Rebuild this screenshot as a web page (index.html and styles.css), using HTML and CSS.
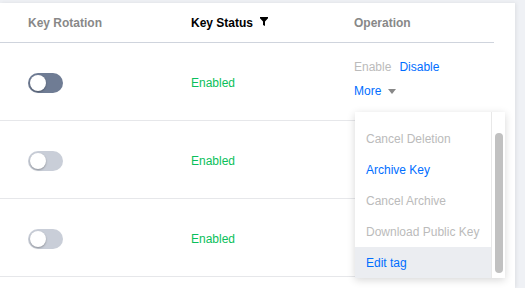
FILE: index.html
```html
<!DOCTYPE html>
<html lang="en">

<head>
    <meta charset="UTF-8">
    <meta name="viewport" content="width=device-width, initial-scale=1.0">
    <title>Key List</title>
    <link rel="stylesheet" href="styles.css">
</head>

<body>
    <div class="panel">
        <div class="table">
            <div class="row head">
                <div class="cell">Key Rotation</div>
                <div class="cell strong">Key Status
                    <svg class="filter" width="8" height="9" viewBox="0 0 8 9"><path d="M0 0H8V1.2L5 4.5V9L3 8V4.5L0 1.2Z" fill="#000"/></svg>
                </div>
                <div class="cell">Operation</div>
            </div>

            <div class="row">
                <div class="cell"><span class="switch dark"><span class="knob"></span></span></div>
                <div class="cell"><span class="status">Enabled</span></div>
                <div class="cell ops">
                    <div class="op-line"><span class="link off">Enable</span><span class="link">Disable</span></div>
                    <div class="op-line"><span class="link">More</span><span class="caret"></span></div>
                </div>
            </div>

            <div class="row">
                <div class="cell"><span class="switch"><span class="knob"></span></span></div>
                <div class="cell"><span class="status">Enabled</span></div>
                <div class="cell"></div>
            </div>

            <div class="row">
                <div class="cell"><span class="switch"><span class="knob"></span></span></div>
                <div class="cell"><span class="status">Enabled</span></div>
                <div class="cell"></div>
            </div>
        </div>

        <!-- "More" menu, opened and scrolled down -->
        <div class="dropdown">
            <div class="menu">
                <ul class="menu-list">
                    <li class="off"></li>
                    <li class="off">Cancel Deletion</li>
                    <li>Archive Key</li>
                    <li class="off">Cancel Archive</li>
                    <li class="off">Download Public Key</li>
                    <li class="hover">Edit tag</li>
                </ul>
            </div>
            <div class="scroll"><div class="thumb"></div></div>
        </div>
    </div>
</body>

</html>
```

FILE: styles.css
```css
body {
    margin: 0;
    background-color: #eff1f5;
    font-family: "Liberation Sans", Arial, Helvetica, sans-serif;
    font-size: 12px;
    color: #000;
}

.panel {
    position: relative;
    margin-top: 3px;
    width: 515px;
    height: 285px;
    background-color: #fff;
    box-shadow: 1px 0 4px rgba(0, 0, 0, 0.08);
    overflow: hidden;
}

.table {
    width: 494px;
}

.row {
    display: grid;
    grid-template-columns: 163px 163px 1fr;
    height: 77px;
    border-bottom: 1px solid #e6e7ea;
}

.row.head {
    height: 39px;
    border-bottom: 1px solid #cfd4dd;
}

.cell {
    display: flex;
    align-items: center;
    padding-left: 28px;
}

.head .cell {
    color: #888;
    font-weight: bold;
}

.head .cell.strong {
    color: #000;
}

.filter {
    margin-left: 7px;
    margin-top: -2px;
}

.switch {
    position: relative;
    display: inline-block;
    width: 35px;
    height: 20px;
    border-radius: 10px;
    background-color: #c9ced8;
    margin-top: 3px;
}

.switch.dark {
    background-color: #6f7c94;
}

.knob {
    position: absolute;
    left: 2px;
    top: 2px;
    width: 16px;
    height: 16px;
    border-radius: 50%;
    background-color: #fff;
    box-shadow: 0 1px 2px rgba(0, 0, 0, 0.3);
}

.status {
    color: #0abf5b;
    margin-top: 3px;
}

.ops {
    flex-direction: column;
    align-items: flex-start;
    justify-content: flex-start;
    padding-top: 12px;
}

.op-line {
    display: flex;
    align-items: center;
    height: 24px;
}

.link {
    color: #006eff;
    margin-right: 8px;
}

.link.off {
    color: #bbb;
}

.caret {
    width: 0;
    height: 0;
    border-left: 4px solid transparent;
    border-right: 4px solid transparent;
    border-top: 5px solid #888;
    margin-left: -1px;
}

.dropdown {
    position: absolute;
    left: 355px;
    top: 109px;
    width: 150px;
    height: 166px;
    display: flex;
    background-color: #fff;
    box-shadow: 0 2px 8px rgba(0, 0, 0, 0.16);
}

.menu {
    flex: 1;
    overflow: hidden;
}

.menu-list {
    list-style: none;
    margin: -20px 0 0;
    padding: 0;
}

.menu-list li {
    height: 31px;
    line-height: 32px;
    padding-left: 11px;
    color: #006eff;
    white-space: nowrap;
}

.menu-list li.off {
    color: #bbb;
}

.menu-list li.hover {
    background-color: #ebedf1;
}

.scroll {
    width: 14px;
    border-left: 1px solid #e8e8e8;
    padding: 21px 0 5px 3px;
    box-sizing: border-box;
}

.thumb {
    width: 8px;
    height: 100%;
    border-radius: 4px;
    background-color: #c1c1c1;
}
```
